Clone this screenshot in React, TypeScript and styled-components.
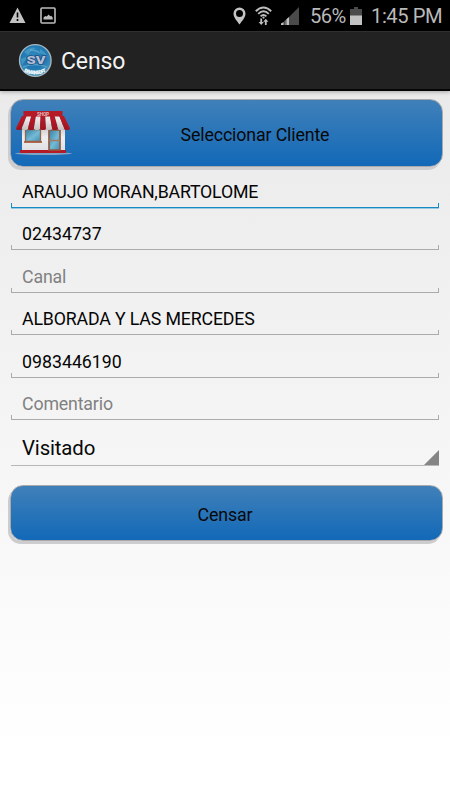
import React from 'react';
import styled, { createGlobalStyle } from 'styled-components';

const GlobalStyle = createGlobalStyle`
  * { box-sizing: border-box; }
  body { margin: 0; font-family: Roboto, sans-serif; background: #fff; }
`;

const Screen = styled.div`
  width: 450px;
  height: 800px;
  display: flex;
  flex-direction: column;
  overflow: hidden;
  background: linear-gradient(#eaeaea 90px, #ededed 180px, #f1f1f1 310px, #f6f6f6 470px, #fff 760px);
`;

const StatusBar = styled.header`
  height: 31px;
  flex: none;
  display: flex;
  align-items: center;
  justify-content: space-between;
  padding: 0 8px 0 9px;
  background: #000;
  color: #b9b9b9;
`;

const StatusGroup = styled.div<{ $gap: number }>`
  display: flex;
  align-items: center;
  gap: ${({ $gap }) => $gap}px;
  svg { display: block; flex: none; }
`;

const StatusText = styled.span<{ $width: number; $before: number; $spacing: number }>`
  width: ${({ $width }) => $width}px;
  margin-left: ${({ $before }) => $before}px;
  font-size: 20.2px;
  line-height: 31px;
  padding-top: 2px;
  letter-spacing: ${({ $spacing }) => $spacing}px;
  white-space: nowrap;
`;

const ActionBar = styled.div`
  height: 60px;
  flex: none;
  display: flex;
  align-items: center;
  gap: 9px;
  padding: 1px 18px 0;
  background: #222;
  border-top: 1px solid #303030;
  border-bottom: 2px solid #050505;
  box-shadow: 0 1px 4px rgba(0, 0, 0, 0.3);
`;

const Title = styled.h1`
  margin: 0;
  padding-top: 1px;
  font-size: 23px;
  font-weight: 400;
  letter-spacing: -0.1px;
  line-height: 30px;
  color: #f3f3f3;
`;

const Form = styled.main`
  display: flex;
  flex-direction: column;
  padding: 8px 7px 0 10px;
`;

const GlossButton = styled.button<{ $height: number }>`
  height: ${({ $height }) => $height}px;
  flex: none;
  display: flex;
  align-items: center;
  padding: 0 0 0 4px;
  border: 1px solid #a9a9ac;
  border-radius: 13px;
  background: linear-gradient(#4080b9, #1269b8);
  box-shadow: -2px 3px 0 #cdcdcf;
  font: 400 17.8px/22px Roboto, sans-serif;
  letter-spacing: -0.14px;
  color: #080808;
`;

const ButtonLabel = styled.span<{ $shift?: number }>`
  flex: 1;
  text-align: center;
  padding: 4px ${({ $shift }) => $shift ?? 4}px 0 0;
`;

const Fields = styled.div`
  display: flex;
  flex-direction: column;
  padding: 0 4px 0 1px;
`;

const Field = styled.div<{ $height: number; $focused?: boolean; $hint?: boolean; $spacing?: number }>`
  height: ${({ $height }) => $height}px;
  display: flex;
  align-items: flex-end;
  padding: 0 0 5px 11px;
  font-size: 17.75px;
  line-height: 22px;
  letter-spacing: ${({ $spacing }) => $spacing ?? 0}px;
  white-space: nowrap;
  color: ${({ $hint }) => ($hint ? '#818181' : '#050505')};
  --line: ${({ $focused }) => ($focused ? '#188ac4' : '#ababab')};
  background:
    linear-gradient(var(--line), var(--line)) left bottom / 1px 5px no-repeat,
    linear-gradient(var(--line), var(--line)) right bottom / 1px 5px no-repeat,
    linear-gradient(var(--line), var(--line)) left bottom / 100% 1px no-repeat;
  box-shadow: ${({ $focused }) => ($focused ? '0 1px 0 #9bc9e2' : 'none')};
`;

const Spinner = styled.div`
  height: 46px;
  margin-bottom: 19px;
  display: flex;
  align-items: flex-end;
  justify-content: space-between;
  padding-left: 11px;
  border-bottom: 1px solid #b8b8b8;
  font-size: 20.4px;
  line-height: 24px;
  letter-spacing: -0.15px;
  color: #080808;
`;

const SpinnerValue = styled.span`
  padding-bottom: 5px;
`;

const SpinnerCorner = styled.i`
  width: 15px;
  height: 15px;
  background: #858585;
  clip-path: polygon(100% 0, 100% 100%, 0 100%);
`;

const WarningIcon = () => (
  <svg width="17" height="17" viewBox="0 0 17 17">
    <path d="M8.5 .5 16.5 16H.5z" fill="#c2c2c2" />
    <path d="M8.5 5.5v5M8.5 12v2" stroke="#000" strokeWidth="1.6" />
  </svg>
);

const PictureIcon = () => (
  <svg width="16" height="17" viewBox="0 0 16 17">
    <rect x="1" y="1" width="14" height="15" rx="1" fill="none" stroke="#bcbcbc" strokeWidth="1.6" />
    <path d="M3.500 12.500v-2l1.800-1.500 1.400.6L8.700 7.500l1.500 1.800 1-.5 1.500 1.700v2z" fill="#bcbcbc" />
  </svg>
);

const PinIcon = () => (
  <svg width="13" height="18" viewBox="0 0 13 18">
    <path d="M6.500.5A6 6 0 0 0 .5 6.500C.5 10.500 4 14 6.500 17.500 9 14 12.500 10.500 12.500 6.500A6 6 0 0 0 6.500.5zm0 2.600a3.500 3.500 0 1 1 0 7 3.500 3.500 0 0 1 0-7z" fill="#c4c4c4" fillRule="evenodd" />
  </svg>
);

const WifiIcon = () => (
  <svg width="17" height="20" viewBox="0 0 17 20" fill="none" stroke="#bdbdbd">
    <path d="M.8 5.200Q8.500-2.400 16.200 5.200M3.200 7.900Q8.500 2.700 13.800 7.900M5.600 10.400Q8.500 7.600 11.400 10.400" strokeWidth="1.900" />
    <circle cx="8.500" cy="11.600" r="1.100" fill="#bdbdbd" stroke="none" />
    <path d="M6.200 12.500v5M10.800 19v-5" strokeWidth="1.800" />
    <path d="M3.600 16h5.200l-2.600 3zM8.200 15.800h5.200l-2.600-3z" fill="#bdbdbd" stroke="none" />
  </svg>
);

const SignalIcon = () => (
  <svg width="18" height="18" viewBox="0 0 18 18">
    <path d="M8 10 18 0v18H8z" fill="#4a4a4a" />
    <path d="M0 18v-1.500L2.700 15v3zM3.600 18v-4l1-1v5zM5.300 18v-5.700L8 10v8z" fill="#c2c2c2" />
  </svg>
);

const BatteryIcon = () => (
  <svg width="12" height="18" viewBox="0 0 12 18">
    <path d="M4 0h4v2h4v7H0V2h4z" fill="#4b4b4b" />
    <path d="M0 8.500h12V18H0z" fill="#c2c2c2" />
  </svg>
);

const AppLogo = () => (
  <svg width="34" height="34" viewBox="0 0 34 34">
    <defs>
      <radialGradient id="globe" cx=".45" cy=".35" r=".65">
        <stop offset="0" stopColor="#2f88bd" />
        <stop offset=".6" stopColor="#2078b2" />
        <stop offset="1" stopColor="#4794bd" />
      </radialGradient>
      <path id="rim" d="M4.500 27Q17 33.500 29.500 27" />
    </defs>
    <circle cx="17.300" cy="16.500" r="15.800" fill="url(#globe)" stroke="#a6b8c0" strokeWidth="1.300" />
    <path d="M6 8q6-6 12-4-5 2-8 7zM22 5q6 3 8 9-4-4-8-5zM3 15q4-3 6-1-3 4-5 7z" fill="#5aaace" opacity=".55" />
    <path d="M12 6q6 0 10 3M5 23q12-5 24 0" fill="none" stroke="#74b5d6" strokeWidth="1.500" opacity=".6" />
    <text x="18" y="19.800" textAnchor="middle" textLength="19" lengthAdjust="spacingAndGlyphs" fontFamily="Roboto, sans-serif" fontWeight="900" fontSize="10.500" fill="#b4bed6" stroke="#214e80" strokeWidth="1.300" paintOrder="stroke">SV</text>
    <text fontFamily="Roboto, sans-serif" fontWeight="900" fontSize="4.800" fill="#fff" stroke="#9fc9dc" strokeWidth=".5" paintOrder="stroke">
      <textPath href="#rim" startOffset="50%" textAnchor="middle" textLength="23">DEVIANSOFT</textPath>
    </text>
  </svg>
);

const stripes = [0, 1, 2, 3, 4, 5, 6, 7, 8];

const ShopIcon = () => (
  <svg width="57" height="46" viewBox="0 0 57 46">
    <defs>
      <linearGradient id="glass" x1="0" y1="0" x2="1" y2="1">
        <stop offset="0" stopColor="#347fa3" />
        <stop offset=".55" stopColor="#73bad5" />
        <stop offset="1" stopColor="#438fb1" />
      </linearGradient>
      <linearGradient id="wall" x1="0" y1="0" x2="0" y2="1">
        <stop offset="0" stopColor="#c9c5c6" />
        <stop offset=".45" stopColor="#eeeeef" />
        <stop offset="1" stopColor="#dedfe3" />
      </linearGradient>
      <linearGradient id="shade" x1="0" y1="0" x2="0" y2="1">
        <stop offset="0" stopColor="#000" stopOpacity="0" />
        <stop offset="1" stopColor="#000" stopOpacity=".16" />
      </linearGradient>
    </defs>
    <ellipse cx="28.500" cy="43.500" rx="28.500" ry="1.500" fill="#8ea8c5" opacity=".9" />
    <path d="M7 16h43v25H7z" fill="url(#wall)" />
    <path d="M5 40h46v3H5z" fill="#b51a27" />
    <path d="M10.500 19.500h15v12h-15z" fill="url(#glass)" stroke="#926752" strokeWidth="1.300" />
    <path d="M9 32h18" stroke="#a65c40" strokeWidth="1.700" />
    <path d="M34 20h11v20H34z" fill="url(#glass)" stroke="#925a43" strokeWidth="1.700" />
    <path d="M34 30.500h11" stroke="#a17b63" strokeWidth="1.500" />
    {stripes.map((i) => {
      const top = 7 + i * 4.66;
      const bottom = 1 + i * 6;
      return (
        <path
          key={i}
          d={`M${top} 6H${top + 4.66}L${bottom + 6} 18Q${bottom + 6} 20 ${bottom + 3} 20Q${bottom} 20 ${bottom} 18z`}
          fill={i % 2 ? '#ebe5e4' : '#b71825'}
        />
      );
    })}
    <path d="M7 10h42l6 10H1z" fill="url(#shade)" />
    <path d="M8.500 1h39v5.500h-39z" fill="#b51a27" />
    <text x="28" y="5.600" textAnchor="middle" textLength="12" lengthAdjust="spacingAndGlyphs" fontFamily="Roboto, sans-serif" fontWeight="700" fontSize="5" fill="#e3bfc0">SHOP</text>
  </svg>
);

const fields = [
  { text: 'ARAUJO MORAN,BARTOLOME', height: 41, spacing: -0.2, focused: true },
  { text: '02434737', height: 42 },
  { text: 'Canal', height: 43, spacing: -0.15, hint: true },
  { text: 'ALBORADA Y LAS MERCEDES', height: 42, spacing: -0.15 },
  { text: '0983446190', height: 43 },
  { text: 'Comentario', height: 42, spacing: -0.15, hint: true },
];

export default function App() {
  return (
    <Screen>
      <GlobalStyle />
      <StatusBar>
        <StatusGroup $gap={14}>
          <WarningIcon />
          <PictureIcon />
        </StatusGroup>
        <StatusGroup $gap={9}>
          <PinIcon />
          <WifiIcon />
          <SignalIcon />
          <StatusText $width={31} $before={2} $spacing={-0.55}>56%</StatusText>
          <BatteryIcon />
          <StatusText $width={71} $before={0} $spacing={-0.45}>1:45 PM</StatusText>
        </StatusGroup>
      </StatusBar>
      <ActionBar>
        <AppLogo />
        <Title>Censo</Title>
      </ActionBar>
      <Form>
        <GlossButton $height={68}>
          <ShopIcon />
          <ButtonLabel>Seleccionar Cliente</ButtonLabel>
        </GlossButton>
        <Fields>
          {fields.map((f) => (
            <Field key={f.text} $height={f.height} $focused={f.focused} $hint={f.hint} $spacing={f.spacing}>
              {f.text}
            </Field>
          ))}
          <Spinner>
            <SpinnerValue>Visitado</SpinnerValue>
            <SpinnerCorner />
          </Spinner>
        </Fields>
        <GlossButton $height={56}>
          <ButtonLabel $shift={7}>Censar</ButtonLabel>
        </GlossButton>
      </Form>
    </Screen>
  );
}
